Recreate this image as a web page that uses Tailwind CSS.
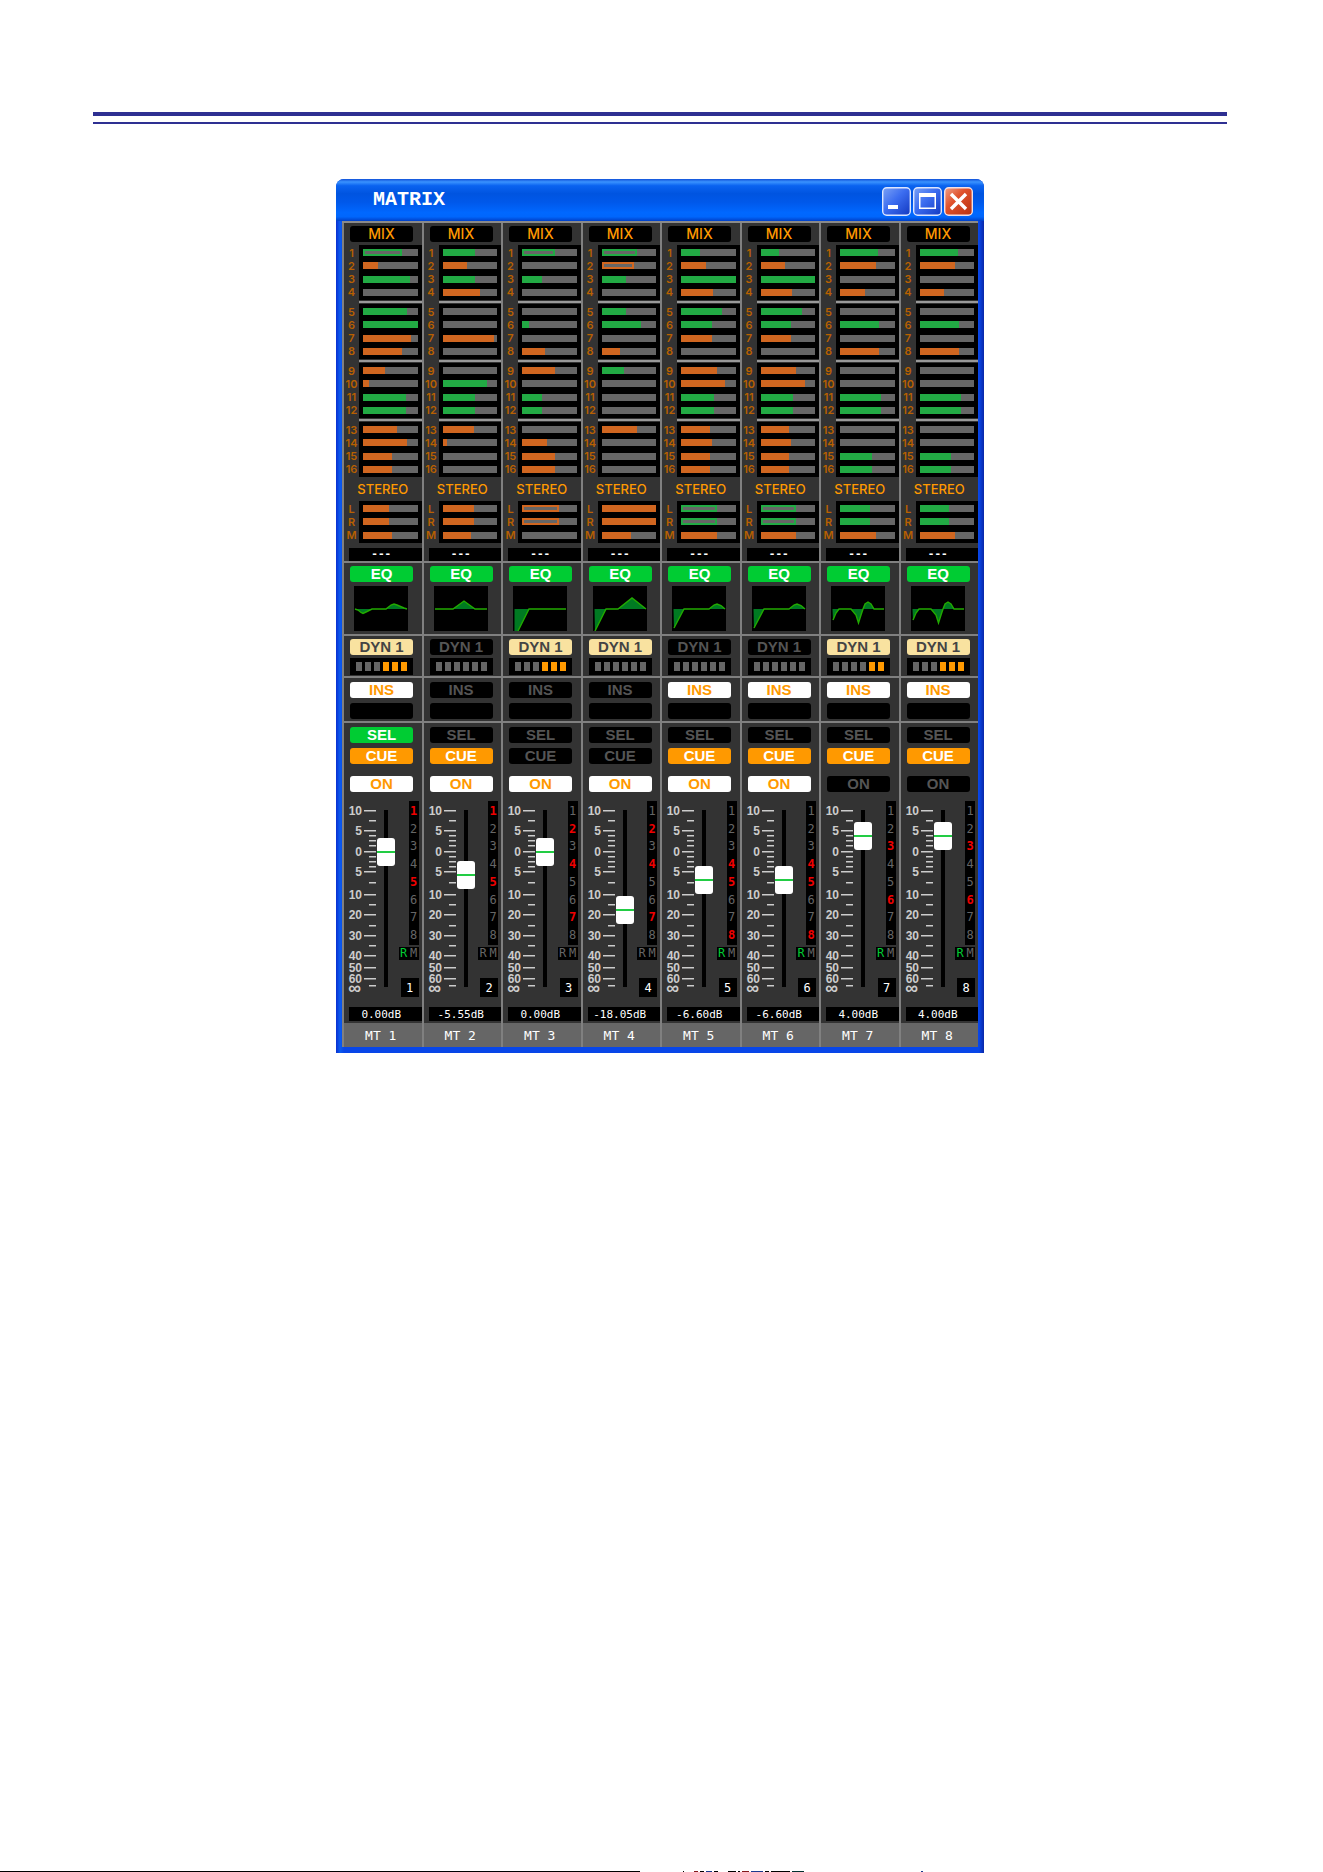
<!DOCTYPE html>
<html lang="en">
<head>
<meta charset="utf-8">
<title>MATRIX</title>
<script src="https://cdn.jsdelivr.net/npm/@tailwindcss/browser@4"></script>
</head>
<body class="flex min-h-screen flex-col bg-white font-['Liberation_Sans',sans-serif]">
<main class="grow pt-28 pr-24 pl-[93px]">
  <div class="h-1 bg-[#2e3092]"></div>
  <div class="mt-1.5 h-0.5 bg-[#2e3092]"></div>

  <section class="mx-auto mt-[55px] w-full max-w-[648px] rounded-t-lg bg-[linear-gradient(to_right,#0a2fd0_0px,#0a5cf0_4px,#0846e8_8px,#0846e8_643px,#0a28a8_648px)] pb-1.5" aria-label="Matrix window">
    <header class="flex h-[42px] items-center rounded-t-lg bg-[linear-gradient(to_bottom,#1050d8_0%,#3a93ff_7%,#0a63f0_16%,#0054e0_35%,#0058ea_55%,#0068ff_80%,#0066fc_90%,#0040c8_100%)] pr-[11px] pl-[37px]">
      <h1 class="grow font-['Liberation_Mono',monospace] text-xl leading-5 font-bold text-white">MATRIX</h1>
      <div class="flex gap-0.5 pt-0.5">
        <button aria-label="Minimize" class="h-[29px] w-[29px]"><svg viewBox="0 0 29 29" class="block h-full w-full"><defs><linearGradient id="blue" x1="0" y1="0" x2="1" y2="1"><stop offset="0" stop-color="#7ba2f5"/><stop offset=".45" stop-color="#3c6df0"/><stop offset="1" stop-color="#1238c0"/></linearGradient><linearGradient id="red" x1="0" y1="0" x2="1" y2="1"><stop offset="0" stop-color="#f0a088"/><stop offset=".4" stop-color="#e0522c"/><stop offset="1" stop-color="#b83010"/></linearGradient></defs><rect x=".7" y=".7" width="27.6" height="27.6" rx="4" fill="url(#blue)" stroke="#dce6ff" stroke-width="1.4"/><path d="M6 18h10v4H6z" fill="#fff"/></svg></button>
        <button aria-label="Maximize" class="h-[29px] w-[29px]"><svg viewBox="0 0 29 29" class="block h-full w-full"><rect x=".7" y=".7" width="27.6" height="27.6" rx="4" fill="url(#blue)" stroke="#dce6ff" stroke-width="1.4"/><path d="M6 6h17v16H6zM7.5 10v10.5h14V10z" fill="#fff" fill-rule="evenodd"/></svg></button>
        <button aria-label="Close" class="h-[29px] w-[29px]"><svg viewBox="0 0 29 29" class="block h-full w-full"><rect x=".7" y=".7" width="27.6" height="27.6" rx="4" fill="url(#red)" stroke="#f4e0e4" stroke-width="1.4"/><path d="M7 7l15 15M22 7L7 22" stroke="#fff" stroke-width="3.4"/></svg></button>
      </div>
    </header>
    <div id="strips" class="mx-1.5 grid grid-cols-8 border-t-2 border-[#8a8a8a] bg-[#333]"></div>
  </section>
</main>
<footer class="flex h-px overflow-hidden" aria-hidden="true">
  <div class="w-[640px] shrink-0 bg-black"></div>
  <div class="ml-[43px] w-px bg-black"></div>
  <div class="ml-2.5 flex w-6 gap-0.5"><i class="w-1 bg-red-900"></i><i class="w-1 bg-black"></i><i class="w-1.5 bg-blue-900"></i><i class="w-1 bg-black"></i></div>
  <div class="ml-2.5 flex w-[76px] gap-0.5"><i class="w-2 bg-black"></i><i class="w-0.5 bg-black"></i><i class="w-2 bg-red-900"></i><i class="w-3 bg-blue-900"></i><i class="w-1 bg-black"></i><i class="w-5 bg-black"></i><i class="w-3 bg-teal-950"></i></div>
  <div class="ml-[117px] w-0.5 bg-blue-900"></div>
</footer>

<script>
// Send levels: colour letter (g/o filled, G/O outlined) and level out of 53.
const strips = [
  {mix:'G38 o15 g46 - g43 g53 o47 o38 o21 o6 g42 g42 o33 o43 o28 o28', st:'o25 o25 o28', dyn:1, led:3, ins:1, sel:1, cue:1, on:1, val:135, db:'0.00dB', act:'15', r:1,
   line:'1 23 4 24 7 26.5 9 27.5 12 26 18 23 32 23 37 19 40 18 43 19 50 22 53 23', area:''},
  {mix:'g32 o24 g32 o36 - - o50 - - g43 g32 g32 o31 o4 - -', st:'o31 o31 o28', cue:1, on:1, val:112, db:'-5.55dB', act:'15',
   line:'1 23 19 23 30 15 41 23 53 23', area:''},
  {mix:'G32 - g19 - - g7 - o22 o32 - g19 g19 - o24 o32 o32', st:'O36 O36 -', dyn:1, led:3, on:1, val:135, db:'0.00dB', act:'247',
   line:'5 45 16 23 53 23', area:'1.5 23 1.5 45'},
  {mix:'G35 O32 g24 - g24 g38 - o18 g22 - - - o35 - - -', st:'o53 o53 o29', dyn:1, on:1, val:77, db:'-18.05dB', act:'247',
   line:'2 45 13 23 25 23 39 12 53 23', area:'1.5 23'},
  {mix:'g18 o24 g53 o31 g40 g30 o30 - o35 o43 g32 g32 o28 o30 o28 o28', st:'G35 G35 o35', ins:1, cue:1, on:1, val:107, db:'-6.60dB', act:'458', r:1,
   line:'2 42 12 23 37 23 42 19 45 18 49 19.5 53 23', area:'1.5 23'},
  {mix:'g18 o24 g53 o31 g40 g30 o30 - o35 o43 g32 g32 o28 o30 o28 o28', st:'G35 G35 o35', ins:1, cue:1, on:1, val:107, db:'-6.60dB', act:'458', r:1,
   line:'2 42 12 23 37 23 42 19 45 18 49 19.5 53 23', area:'1.5 23'},
  {mix:'g37 o35 - o24 - g38 - o38 - - g40 g40 - - g31 g31', st:'g29 g29 o35', dyn:1, led:2, ins:1, cue:1, val:151, db:'4.00dB', act:'36', r:1,
   line:'2 34 5 27 8 23 20 23 25 29 27.5 37 30 29 32 23 34 18 37 16 40 18 43 23 53 23', area:'1.5 23'},
  {mix:'g37 o35 - o24 - g38 - o38 - - g40 g40 - - g31 g31', st:'g29 g29 o35', dyn:1, led:3, ins:1, cue:1, val:151, db:'4.00dB', act:'36', r:1,
   line:'2 34 5 27 8 23 20 23 25 29 27.5 37 30 29 32 23 34 18 37 16 40 18 43 23 53 23', area:'1.5 23'},
];

const fills = {
  g: 'h-full bg-[#22aa44]', o: 'h-full bg-[#d06620]',
  G: 'h-full border-2 border-[#22aa44]', O: 'h-full border-2 border-[#d06620]',
};
const tones = {
  off: 'bg-black text-[#555]', green: 'bg-[#00cc33] text-white', orange: 'bg-[#ff9900] text-white',
  white: 'bg-white text-[#ff9900]', cream: 'bg-[#f9e2a0] text-[#444]',
};
const rows = (items, labels) => items.map((s, i) => `
  <div class="flex flex-1 items-center">
    <span class="flex w-[15px] justify-center font-['Inter',sans-serif] text-[11px] leading-3 font-semibold text-[#b86000]">${labels[i]}</span>
    <div class="h-full grow bg-black px-1 flex items-center">
      <div class="h-[7px] w-full bg-[#666]">${s === '-' ? '' : `<div class="${fills[s[0]]}" style="width:${s.slice(1) / 53 * 100}%"></div>`}</div>
    </div>
  </div>`).join('');
const edge = '<div class="ml-[15px] h-px bg-black"></div>';
const block = (items, labels, size) => `<div class="flex flex-col ${size}">${edge}${rows(items, labels)}${edge}</div>`;
const pill = (text, tone) => `<button class="block h-4 w-[63px] rounded-[3px] text-center text-[15px] leading-4 font-bold ${tone}">${text}</button>`;

const marks = [['10',15],['5',35],['0',56],['5',76],['10',99],['20',119],['30',140],['40',160],['50',172],['60',183]];
const minor = [25, 40, 45, 50, 61, 66, 71, 87, 109, 130, 150, 190];
const scale = `<svg viewBox="0 0 33 205" class="h-[205px] w-[33px] shrink-0 font-['Liberation_Sans',sans-serif] text-xs font-bold" fill="#ccc">
  ${marks.map(([t, y]) => `<text x="18" y="${y + 4}" text-anchor="end">${t}</text><rect x="20" y="${y - 1}" width="12" height="1.5"/>`).join('')}
  ${minor.map(y => `<rect x="25" y="${y - 1}" width="7" height="1.5"/>`).join('')}
  <text x="17" y="198" text-anchor="end" font-size="18">∞</text></svg>`;

document.getElementById('strips').innerHTML = strips.map((s, i) => {
  const mix = s.mix.split(' ');
  const groups = [0, 4, 8, 12].map(k => block(mix.slice(k, k + 4), [k + 1, k + 2, k + 3, k + 4], 'h-[55px]'))
    .join('<div class="my-px ml-[15px] h-0.5 bg-[#999]"></div>');
  const leds = [0, 1, 2, 3, 4, 5].map(k => `<span class="${k >= 6 - (s.led || 0) ? 'h-[9px] w-1.5 bg-[#ff9900]' : 'h-[9px] w-1.5 bg-[#666]'}"></span>`).join('');
  const list = [1, 2, 3, 4, 5, 6, 7, 8].map(n => `<span class="${s.act.includes(n) ? 'flex flex-1 items-center text-[#f00000] font-bold' : 'flex flex-1 items-center text-[#666]'}">${n}</span>`).join('');
  return `
  <div class="border-l-2 border-[#808080]">
    <div class="border-b-2 border-[#808080] pt-[3px]">
      <div class="mb-[3px] pl-1.5"><button class="block h-4 w-[63px] rounded-[3px] bg-black text-center font-['Inter',sans-serif] text-sm leading-4 font-medium text-[#ff9900]">MIX</button></div>
      ${groups}
      <div class="text-center font-['Inter',sans-serif] text-[13px] leading-6 font-medium text-[#ff9900]">STEREO</div>
      ${block(s.st.split(' '), ['L', 'R', 'M'], 'h-[42px]')}
      <div class="mt-[5px] ml-[5px] h-[13px] bg-black pr-2 text-center font-['DejaVu_Sans_Mono',monospace] text-[11px] leading-3 font-bold text-white">---</div>
    </div>
    <div class="border-b-2 border-[#808080] py-[3px] pl-1.5">
      ${pill('EQ', tones.green)}
      <svg viewBox="0 0 54 45" class="mt-1 ml-1 block h-[45px] w-[54px] bg-black"><polygon points="${s.area} ${s.line}" fill="#007a22"/><polyline points="${s.line}" fill="none" stroke="#22aa00" stroke-width="1.4"/></svg>
    </div>
    <div class="border-b-2 border-[#808080] pt-[3px] pb-px pl-1.5">
      ${pill('DYN 1', s.dyn ? tones.cream : tones.off)}
      <div class="mt-[3px] flex h-[17px] w-[63px] items-center gap-[3px] bg-black pl-1.5">${leds}</div>
    </div>
    <div class="border-b-2 border-[#808080] pt-1 pb-0.5 pl-1.5">
      ${pill('INS', s.ins ? tones.white : tones.off)}
      <div class="mt-[5px] h-4 w-[63px] rounded-[3px] bg-black"></div>
    </div>
    <div class="pt-1 pl-1.5">
      ${pill('SEL', s.sel ? tones.green : tones.off)}
      <div class="mt-[5px] mb-3">${pill('CUE', s.cue ? tones.orange : tones.off)}</div>
      ${pill('ON', s.on ? tones.white : tones.off)}
    </div>
    <div class="mt-1 mb-1.5 flex h-[205px]">
      ${scale}
      <input type="range" min="0" max="177" value="${s.val}" aria-label="MT ${i + 1} level" class="m-0 h-[205px] w-[18px] shrink-0 appearance-none bg-transparent bg-[linear-gradient(#000,#000)] bg-size-[4px_177px] bg-center bg-no-repeat [direction:rtl] [writing-mode:vertical-lr] [&::-webkit-slider-thumb]:h-7 [&::-webkit-slider-thumb]:w-[18px] [&::-webkit-slider-thumb]:appearance-none [&::-webkit-slider-thumb]:rounded-[3px] [&::-webkit-slider-thumb]:bg-[linear-gradient(to_bottom,#fff_13px,#22cc44_13px,#22cc44_15px,#fff_15px)]">
      <div class="flex grow flex-col items-end pt-[5px] pr-[3px] font-['DejaVu_Sans_Mono',monospace] text-xs leading-3">
        <div class="flex h-36 w-2.5 flex-col items-center bg-black py-px">${list}</div>
        <div class="mt-0.5 flex h-[13px] w-5 justify-around bg-black text-[#666]"><span class="${s.r ? 'text-[#00cc33]' : 'text-[#666]'}">R</span><span>M</span></div>
        <div class="mt-[18px] flex h-[19px] w-[18px] items-center justify-center bg-black text-white">${i + 1}</div>
      </div>
    </div>
    <div class="ml-[5px] h-3.5 bg-black pr-2 text-center font-['DejaVu_Sans_Mono',monospace] text-[11px] leading-4 whitespace-nowrap text-white">${s.db}</div>
    <div class="mt-0.5 h-6 bg-[#666] pr-1 text-center font-['DejaVu_Sans_Mono',monospace] text-[13px] leading-[26px] text-white">MT ${i + 1}</div>
  </div>`;
}).join('');
</script>
</body>
</html>
